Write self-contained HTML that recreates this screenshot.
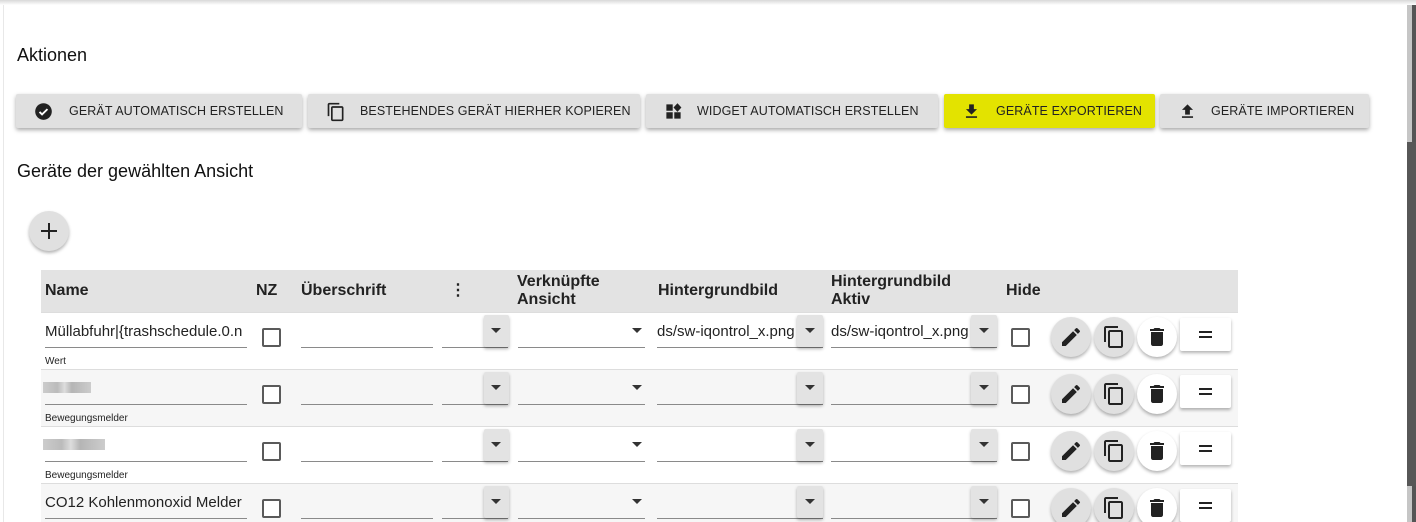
<!DOCTYPE html>
<html style="width:1416px;height:522px;overflow:hidden"><head><meta charset="utf-8"><style>
*{box-sizing:border-box;margin:0;padding:0}
body{width:1416px;height:522px;overflow:hidden;background:#fff;font-family:"Liberation Sans",sans-serif;color:#111;position:relative}
.a{position:absolute}
.topsh{left:0;top:0;width:1416px;height:5px;background:linear-gradient(#d8d8d8,#fff)}
.lline{left:3px;top:5px;width:1px;height:517px;background:#e8e8e8}
h2{position:absolute;font-weight:normal;font-size:18px;color:#111}
.btn{position:absolute;top:94px;height:34px;background:#e0e0e0;box-shadow:0 2px 4px rgba(0,0,0,.35);border-radius:2px;font-size:12.5px;letter-spacing:.1px;color:#222;display:flex;align-items:center;white-space:nowrap}
.btn svg{position:absolute;left:18px;top:8px}
.btn span{position:absolute;top:10px}
.hdr{left:41px;top:270px;width:1197px;height:42px;background:#e3e3e3}
.ht{position:absolute;font-weight:bold;font-size:16px;color:#222;line-height:18px}
.row{position:absolute;left:41px;width:1197px;height:57px;border-top:1px solid #ddd}
.ul{position:absolute;height:1px;background:#8a8a8a}
.cb{position:absolute;width:19px;height:19px;border:2px solid #5a5a5a;border-radius:2px;background:#fff}
.ddb{position:absolute;width:25px;height:32px;background:#e3e3e3;box-shadow:0 2px 3px rgba(0,0,0,.3);border-radius:2px}
.tri{position:absolute;width:0;height:0;border-left:5px solid transparent;border-right:5px solid transparent;border-top:5px solid #333}
.circ{position:absolute;width:40px;height:40px;border-radius:50%;background:#e0e0e0;box-shadow:0 2px 3px rgba(0,0,0,.3)}
.circ svg{position:absolute;left:8px;top:8px}
.eq{position:absolute;width:51px;height:33px;background:#fff;box-shadow:0 2px 3px rgba(0,0,0,.3);border-radius:2px}
.eq:before,.eq:after{content:"";position:absolute;left:19px;width:13px;height:2px;background:#222}
.eq:before{top:13px}.eq:after{top:18px}
.nm{position:absolute;font-size:15px;color:#222;white-space:nowrap;overflow:hidden}
.sub{position:absolute;font-size:10px;color:#222}
.blur{position:absolute;height:11px;background:linear-gradient(90deg,#ccc,#bbb 30%,#ddd 45%,#b5b5b5 60%,#ccc)}
</style></head><body>
<div class="a topsh"></div>
<div class="a lline"></div>
<div class="a" style="left:1407px;top:5px;width:5px;height:517px;background:#c6c6c6"></div>
<div class="a" style="left:1412px;top:5px;width:4px;height:517px;background:#555"></div>
<div class="a" style="left:1407px;top:142px;width:9px;height:344px;background:#575757"></div>

<h2 style="left:17px;top:45px">Aktionen</h2>

<div class="btn" style="left:16px;width:286px"><svg width="19" height="19" viewBox="0 0 24 24"><circle cx="12" cy="12" r="10.5" fill="#222"/><path d="M7 12.5l3.2 3.2L17 9" stroke="#fff" stroke-width="2.4" fill="none"/></svg><span style="left:53px">GERÄT AUTOMATISCH ERSTELLEN</span></div>
<div class="btn" style="left:308px;width:332px"><svg width="20" height="20" viewBox="0 0 24 24"><path d="M16 1H4c-1.1 0-2 .9-2 2v14h2V3h12V1zm3 4H8c-1.1 0-2 .9-2 2v14c0 1.1.9 2 2 2h11c1.1 0 2-.9 2-2V7c0-1.1-.9-2-2-2zm0 16H8V7h11v14z" fill="#222"/></svg><span style="left:52px">BESTEHENDES GERÄT HIERHER KOPIEREN</span></div>
<div class="btn" style="left:646px;width:292px"><svg width="19" height="19" viewBox="0 0 24 24"><path d="M3 3h8v8H3zM3 13h8v8H3zM13 13h8v8h-8zM17 1.5l5 5.5-5 5.5-5-5.5z" fill="#222"/></svg><span style="left:51px">WIDGET AUTOMATISCH ERSTELLEN</span></div>
<div class="btn" style="left:944px;width:211px;background:#e3e300"><svg width="19" height="19" viewBox="0 0 24 24"><path d="M19 9h-4V3H9v6H5l7 7 7-7zM5 18v2h14v-2H5z" fill="#222"/></svg><span style="left:52px">GERÄTE EXPORTIEREN</span></div>
<div class="btn" style="left:1160px;width:209px"><svg width="19" height="19" viewBox="0 0 24 24"><path d="M9 16h6v-6h4l-7-7-7 7h4zm-4 2h14v2H5z" fill="#222"/></svg><span style="left:51px">GERÄTE IMPORTIEREN</span></div>

<h2 style="left:17px;top:161px">Geräte der gewählten Ansicht</h2>
<div class="circ" style="left:29px;top:211px"><svg width="24" height="24" viewBox="0 0 24 24"><path d="M12 4v16M4 12h16" stroke="#222" stroke-width="2"/></svg></div>

<div class="a hdr"></div>
<div class="ht" style="left:45px;top:282px">Name</div>
<div class="ht" style="left:256px;top:282px">NZ</div>
<div class="ht" style="left:301px;top:282px">Überschrift</div>
<div class="ht" style="left:450px;top:282px">⋮</div>
<div class="ht" style="left:517px;top:273px">Verknüpfte<br>Ansicht</div>
<div class="ht" style="left:658px;top:282px">Hintergrundbild</div>
<div class="ht" style="left:831px;top:273px">Hintergrundbild<br>Aktiv</div>
<div class="ht" style="left:1006px;top:282px">Hide</div>

<div id="rows"></div>
<script>
var rows=[{t:312,bg:"#fff",name:"Müllabfuhr|{trashschedule.0.n",sub:"Wert",img:1},
{t:369,bg:"#f6f6f6",blur:48,sub:"Bewegungsmelder"},
{t:426,bg:"#fff",blur:62,sub:"Bewegungsmelder"},
{t:483,bg:"#f6f6f6",name:"CO12 Kohlenmonoxid Melder",sub:""}];
var h="";
var pencil='<svg width="24" height="24" viewBox="0 0 24 24"><path d="M3 17.25V21h3.75L17.81 9.94l-3.75-3.75L3 17.25zM20.71 7.04a1 1 0 000-1.41l-2.34-2.34a1 1 0 00-1.41 0l-1.83 1.83 3.75 3.75 1.83-1.83z" fill="#222"/></svg>';
var copy='<svg width="24" height="24" viewBox="0 0 24 24"><path d="M16 1H4c-1.1 0-2 .9-2 2v14h2V3h12V1zm3 4H8c-1.1 0-2 .9-2 2v14c0 1.1.9 2 2 2h11c1.1 0 2-.9 2-2V7c0-1.1-.9-2-2-2zm0 16H8V7h11v14z" fill="#222"/></svg>';
var del='<svg width="24" height="24" viewBox="0 0 24 24"><path d="M6 19c0 1.1.9 2 2 2h8c1.1 0 2-.9 2-2V7H6v12zM19 4h-3.5l-1-1h-5l-1 1H5v2h14V4z" fill="#222"/></svg>';
rows.forEach(function(r){var T=r.t;
h+='<div class="row" style="top:'+T+'px;background:'+r.bg+'"></div>';
if(r.name)h+='<div class="nm" style="left:45px;top:'+(T+11)+'px;width:203px">'+r.name+'</div>';
if(r.blur)h+='<div class="blur" style="left:43px;top:'+(T+13)+'px;width:'+r.blur+'px"></div>';
h+='<div class="ul" style="left:45px;top:'+(T+35)+'px;width:202px"></div>';
h+='<div class="sub" style="left:45px;top:'+(T+44)+'px">'+r.sub+'</div>';
h+='<div class="cb" style="left:262px;top:'+(T+16)+'px"></div>';
h+='<div class="ul" style="left:301px;top:'+(T+35)+'px;width:132px"></div>';
h+='<div class="ul" style="left:442px;top:'+(T+35)+'px;width:66px"></div>';
h+='<div class="ddb" style="left:484px;top:'+(T+3)+'px"><div class="tri" style="left:7px;top:13px"></div></div>';
h+='<div class="ul" style="left:518px;top:'+(T+35)+'px;width:127px"></div>';
h+='<div class="tri" style="left:632px;top:'+(T+16)+'px"></div>';
h+='<div class="ul" style="left:657px;top:'+(T+35)+'px;width:166px"></div>';
h+='<div class="ul" style="left:831px;top:'+(T+35)+'px;width:166px"></div>';
if(r.img){h+='<div class="nm" style="left:657px;top:'+(T+11)+'px;width:140px;direction:rtl;text-align:left">ds/sw-iqontrol_x.png</div>';
h+='<div class="nm" style="left:831px;top:'+(T+11)+'px;width:140px;direction:rtl;text-align:left">ds/sw-iqontrol_x.png</div>';}
h+='<div class="ddb" style="left:797px;top:'+(T+3)+'px;width:26px"><div class="tri" style="left:8px;top:13px"></div></div>';
h+='<div class="ddb" style="left:971px;top:'+(T+3)+'px;width:26px"><div class="tri" style="left:8px;top:13px"></div></div>';
h+='<div class="cb" style="left:1011px;top:'+(T+16)+'px"></div>';
h+='<div class="circ" style="left:1051px;top:'+(T+5)+'px">'+pencil+'</div>';
h+='<div class="circ" style="left:1094px;top:'+(T+5)+'px">'+copy+'</div>';
h+='<div class="circ" style="left:1137px;top:'+(T+5)+'px;background:#fff">'+del+'</div>';
h+='<div class="eq" style="left:1180px;top:'+(T+6)+'px"></div>';
});
document.getElementById("rows").innerHTML=h;
</script>
</body></html>
